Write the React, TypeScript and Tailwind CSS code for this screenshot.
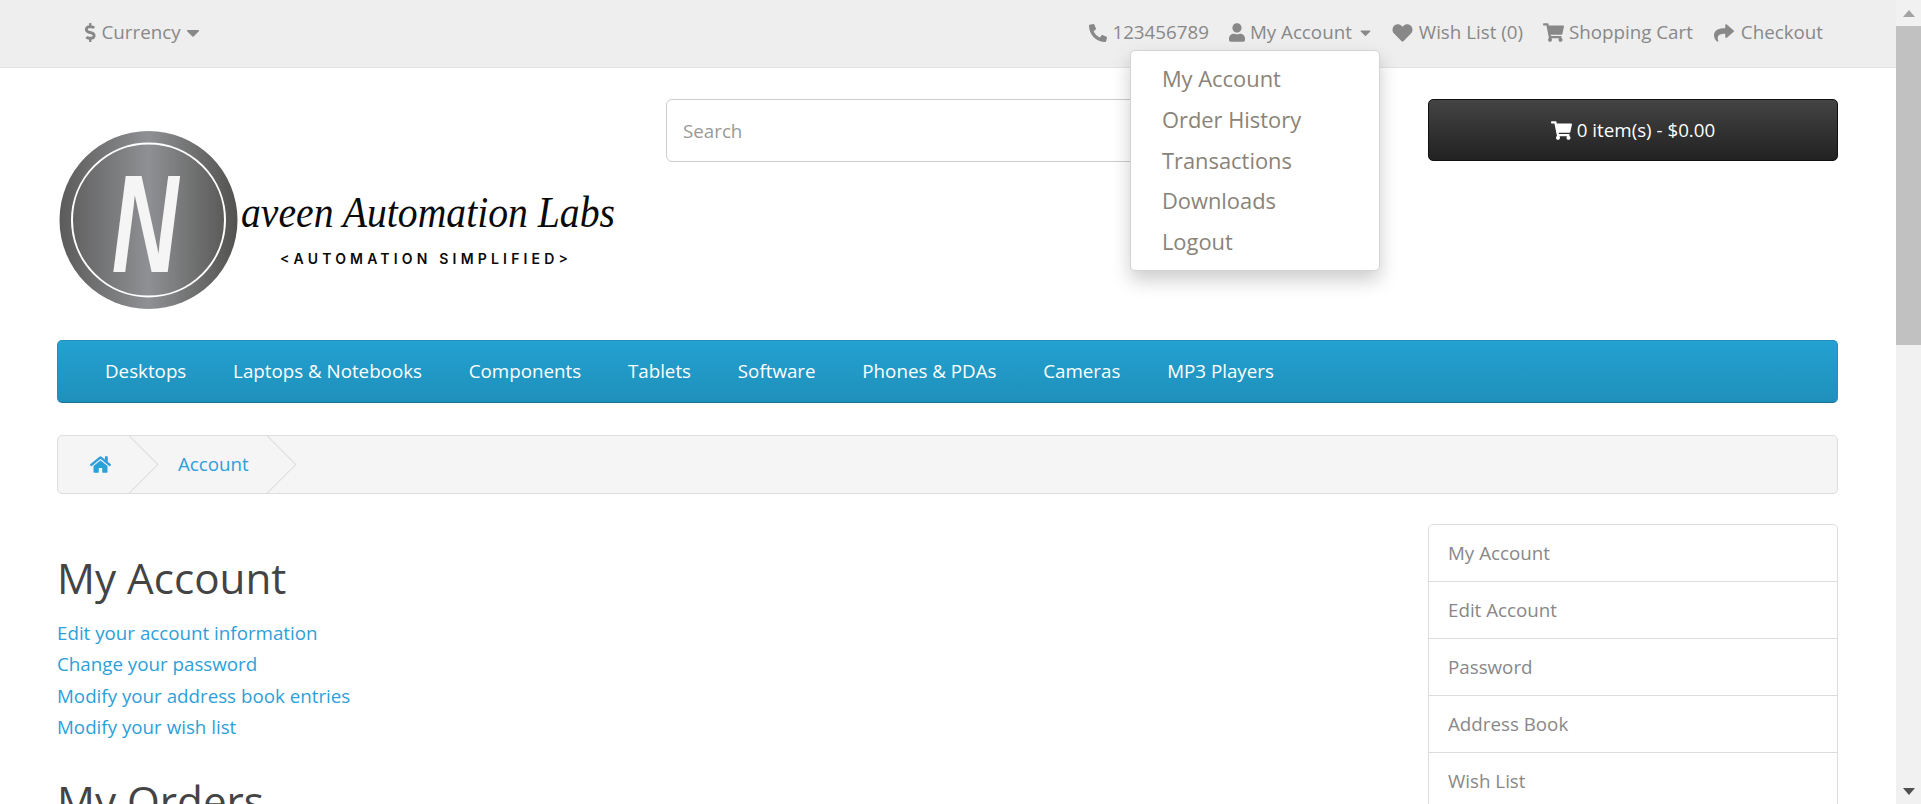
import React from 'react';
import { FaCaretDown, FaDollarSign, FaHeart, FaHome, FaPhone, FaShare, FaShoppingCart, FaUser } from 'react-icons/fa';

const menuItems = ['Desktops', 'Laptops & Notebooks', 'Components', 'Tablets', 'Software', 'Phones & PDAs', 'Cameras', 'MP3 Players'];
const dropdownItems = ['My Account', 'Order History', 'Transactions', 'Downloads', 'Logout'];
const accountLinks = ['Edit your account information', 'Change your password', 'Modify your address book entries', 'Modify your wish list'];
const sideLinks = ['My Account', 'Edit Account', 'Password', 'Address Book', 'Wish List', 'Order History'];

const Logo: React.FC = () => (
  <svg width="560" height="184" viewBox="0 0 560 184" className="block">
    <defs>
      <linearGradient id="metal" x1="0" y1="0" x2="1" y2="0">
        <stop offset="0" stopColor="#5b5b5b" />
        <stop offset="0.5" stopColor="#8f9093" />
        <stop offset="1" stopColor="#525250" />
      </linearGradient>
    </defs>
    <circle cx="91.5" cy="91" r="89" fill="url(#metal)" />
    <circle cx="91.5" cy="91" r="76.5" fill="none" stroke="#ffffff" strokeWidth="2" />
    <text textAnchor="middle" fontFamily="Liberation Sans, sans-serif" fontWeight="700" fontStyle="italic" fontSize="140" fill="#f5f5f5" transform="translate(88 143) scale(0.66 1)">N</text>
    <text x="184" y="98" fontFamily="Liberation Serif, serif" fontStyle="italic" fontSize="44" fill="#0a0a0a" textLength="374" lengthAdjust="spacingAndGlyphs">aveen Automation Labs</text>
    <text x="223" y="135" fontFamily="Inter, sans-serif" fontWeight="600" fontSize="14" fill="#0a0a0a" textLength="288">&lt;AUTOMATION SIMPLIFIED&gt;</text>
  </svg>
);

const Scrollbar: React.FC = () => (
  <div className="flex h-full w-[25px] shrink-0 flex-col items-center bg-[#f1f1f1]">
    <div className="flex h-[26px] w-full items-center justify-center">
      <div className="h-0 w-0 border-x-[6px] border-b-[7px] border-x-transparent border-b-[#a3a3a3]" />
    </div>
    <div className="h-[319px] w-full bg-[#c1c1c1]" />
    <div className="flex-1" />
    <div className="flex h-[26px] w-full items-center justify-center">
      <div className="h-0 w-0 border-x-[6px] border-t-[7px] border-x-transparent border-t-[#505050]" />
    </div>
  </div>
);

const App: React.FC = () => {
  return (
    <div className="flex h-[804px] w-full overflow-hidden bg-white font-['Open_Sans',sans-serif] text-[18.75px] text-[#666666]">
      <div className="min-w-0 flex-1">
        {/* top bar */}
        <nav className="flex h-[68px] items-center border-b border-[#e2e2e2] bg-[#eeeeee] pb-[2px] pl-[84px] pr-[73px] text-[#888888]">
          <div className="flex items-center">
            <FaDollarSign className="mr-[5px] h-[19px] w-[12.5px]" />
            <span>Currency</span>
            <FaCaretDown className="ml-[5px] h-[21px] w-[14px]" />
          </div>
          <ul className="ml-auto flex items-center">
            <li className="flex items-center">
              <FaPhone className="mr-[5px] h-[18px] w-[18px] -scale-x-100" />
              <span>123456789</span>
            </li>
            <li className="relative ml-[20px] flex items-center">
              <FaUser className="mr-[5px] h-[19px] w-[16px]" />
              <span>My Account</span>
              <FaCaretDown className="ml-[8px] h-[17px] w-[11px]" />
              <div className="absolute left-[-99px] top-[32px] z-10 w-[250px] rounded-[5px] border border-[#d4d4d4] bg-white pb-[7px] pl-[31px] pt-[9px] text-[21.9px] leading-[33.2px] text-[#8a8378] shadow-[0_9px_19px_rgba(0,0,0,0.2)]">
                {dropdownItems.map((item) => (
                  <div key={item} className="h-[40.6px] pt-[2px]">{item}</div>
                ))}
              </div>
            </li>
            <li className="ml-[20px] flex items-center">
              <FaHeart className="mr-[5px] h-[20px] w-[23px]" />
              <span>Wish List (0)</span>
            </li>
            <li className="ml-[20px] flex items-center">
              <FaShoppingCart className="mr-[5px] h-[19px] w-[21px]" />
              <span>Shopping Cart</span>
            </li>
            <li className="ml-[20px] flex items-center">
              <FaShare className="mr-[6px] h-[20px] w-[22px]" />
              <span>Checkout</span>
            </li>
          </ul>
        </nav>

        <div className="pl-[57px] pr-[58px]">
          {/* header */}
          <header className="flex h-[272px] items-start">
            <div className="mt-[61px] w-[609px] shrink-0">
              <Logo />
            </div>
            <div className="mt-[31px] flex h-[63px] w-[714px] shrink-0 items-center rounded-[6px] border border-[#cccccc] bg-white px-[16px] pt-[1px] text-[#999999]">
              Search
            </div>
            <button className="ml-auto mt-[31px] flex h-[62px] w-[410px] items-center justify-center rounded-[5px] border border-[#111111] bg-gradient-to-b from-[#444444] to-[#222222] text-white">
              <FaShoppingCart className="mr-[5px] h-[19px] w-[21px]" />
              0 item(s) - $0.00
            </button>
          </header>

          {/* menu */}
          <div className="flex h-[63px] items-center rounded-[5px] border border-[#1f90bb] border-b-[#1b6f95] bg-gradient-to-b from-[#23a1d1] to-[#1f90bb] pl-[47px] text-white">
            <ul className="flex gap-[46.8px]">
              {menuItems.map((item) => (
                <li key={item}>{item}</li>
              ))}
            </ul>
          </div>

          {/* breadcrumb */}
          <ul className="mt-[32px] flex h-[59px] items-center overflow-hidden rounded-[5px] border border-[#dddddd] bg-[#f5f5f5] text-[#2d9fd9]">
            <li className="relative flex h-full w-[72px] items-center pl-[32px]">
              <FaHome className="h-[19px] w-[21px]" />
              <div className="absolute right-[-20px] top-[8px] h-[41px] w-[41px] rotate-45 border-r border-t border-[#dddddd]" />
            </li>
            <li className="relative flex h-full w-[138px] items-center pl-[48px]">
              <span>Account</span>
              <div className="absolute right-[-20px] top-[8px] h-[41px] w-[41px] rotate-45 border-r border-t border-[#dddddd]" />
            </li>
          </ul>

          {/* content */}
          <div className="mt-[30px] flex items-start justify-between">
            <div>
              <h1 className="mb-[11px] mt-[26px] text-[42.2px] font-normal leading-[56px] text-[#444444]">My Account</h1>
              <ul className="leading-[31.3px] text-[#2d9fd9]">
                {accountLinks.map((link) => (
                  <li key={link}>{link}</li>
                ))}
              </ul>
              <h2 className="mt-[31px] text-[42.2px] font-normal leading-[56px] text-[#444444]">My Orders</h2>
            </div>
            <div className="w-[410px] rounded-[5px] border border-[#dddddd]">
              {sideLinks.map((link, i) => (
                <div key={link} className={`flex items-center pl-[19px] text-[#888888] ${i > 0 ? 'h-[57px] border-t border-[#dddddd]' : 'h-[56px]'}`}>
                  {link}
                </div>
              ))}
            </div>
          </div>
        </div>
      </div>
      <Scrollbar />
    </div>
  );
};

export default App;
